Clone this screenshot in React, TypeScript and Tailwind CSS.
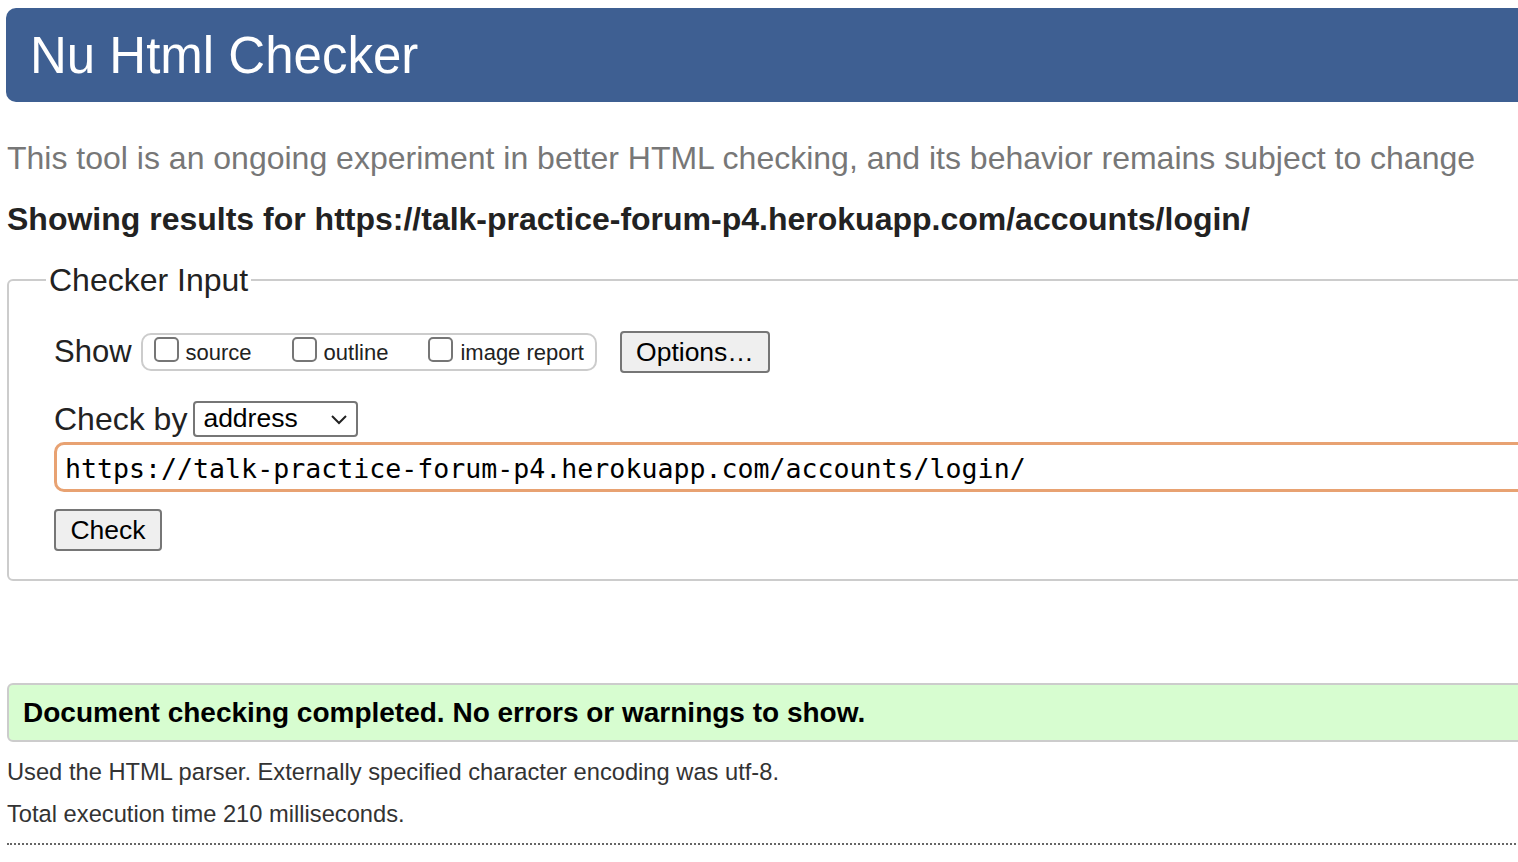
export default function App() {
  const sans = { fontFamily: '"Liberation Sans", Arial, sans-serif' }
  return (
    <div className="w-[1518px] h-[862px] overflow-hidden bg-white" style={sans}>
      <div className="w-[1560px] pl-[6px]">
        {/* header */}
        <div className="mt-[8px] h-[94px] bg-[#3e5f92] rounded-[10px] flex items-center pl-[24px]">
          <h1 className="text-white text-[51px] leading-none font-normal">Nu Html Checker</h1>
        </div>

        <p className="mt-[38px] pl-[1px] text-[32px] leading-[36px] text-[#777]">
          This tool is an ongoing experiment in better HTML checking, and its behavior remains subject to change
        </p>
        <p className="mt-[25px] pl-[1px] text-[32px] leading-[36px] font-bold text-[#222]">
          Showing results for https://talk-practice-forum-p4.herokuapp.com/accounts/login/
        </p>

        {/* checker input */}
        <fieldset className="mt-[26px] ml-[1px] border-2 border-[#ccc] rounded-[6px] pl-[45px] pb-[28px]">
          <legend className="-ml-[8px] px-[3px] text-[32px] leading-[34px] text-[#222]">Checker Input</legend>

          <div className="mt-[34px] flex items-center h-[42px]">
            <span className="text-[31px] text-[#222] mr-[9px]">Show</span>
            <div className="h-[38px] border-2 border-[#ccc] rounded-[10px] flex items-center pl-[11px] pr-[11px] gap-[40px]">
              <label className="flex items-center text-[22px] text-[#222]">
                <span className="w-[25px] h-[25px] border-2 border-[#767676] rounded-[5px] bg-white mr-[7px] -mt-[6px]"></span>
                source
              </label>
              <label className="flex items-center text-[22px] text-[#222]">
                <span className="w-[25px] h-[25px] border-2 border-[#767676] rounded-[5px] bg-white mr-[7px] -mt-[6px]"></span>
                outline
              </label>
              <label className="flex items-center text-[22px] text-[#222]">
                <span className="w-[25px] h-[25px] border-2 border-[#767676] rounded-[5px] bg-white mr-[7px] -mt-[6px]"></span>
                image report
              </label>
            </div>
            <button className="ml-[23px] h-[42px] w-[150px] bg-[#efefef] border-2 border-[#767676] rounded-[4px] text-[26.5px] text-black">
              Options…
            </button>
          </div>

          <div className="mt-[28px] flex items-center h-[36px]">
            <span className="text-[32px] text-[#222] mr-[6px]">Check by</span>
            <div className="w-[165px] h-[36px] border-2 border-[#767676] rounded-[4px] flex items-center justify-between pl-[8px] pr-[8px] bg-white">
              <span className="text-[26.5px] text-black">address</span>
              <svg width="18" height="12" viewBox="0 0 18 12" fill="none">
                <path d="M2 3l7 7 7-7" stroke="#222" strokeWidth="2" />
              </svg>
            </div>
          </div>

          <div className="mt-[5px] h-[50px] border-[3px] border-[#e8a272] rounded-[10px] flex items-center pl-[8px] pt-[3px]">
            <span
              className="text-[26.6px] text-black"
              style={{ fontFamily: '"DejaVu Sans Mono", "Liberation Mono", monospace' }}
            >
              https://talk-practice-forum-p4.herokuapp.com/accounts/login/
            </span>
          </div>

          <button className="mt-[17px] h-[42px] w-[108px] bg-[#efefef] border-2 border-[#767676] rounded-[4px] text-[26.5px] text-black">
            Check
          </button>
        </fieldset>

        {/* result */}
        <div className="mt-[102px] ml-[1px] h-[59px] bg-[#d7fdd0] border-2 border-[#ccc] rounded-[6px] flex items-center pl-[14px]">
          <span className="text-[28px] font-bold text-black">Document checking completed. No errors or warnings to show.</span>
        </div>

        <p className="mt-[17px] ml-[1px] text-[23.7px] leading-[26px] text-[#333]">
          Used the HTML parser. Externally specified character encoding was utf-8.
        </p>
        <p className="mt-[16px] ml-[1px] text-[23.7px] leading-[26px] text-[#333]">Total execution time 210 milliseconds.</p>
        <div className="mt-[16px] ml-[1px] border-t-2 border-dotted border-[#666]"></div>
      </div>
    </div>
  )
}
